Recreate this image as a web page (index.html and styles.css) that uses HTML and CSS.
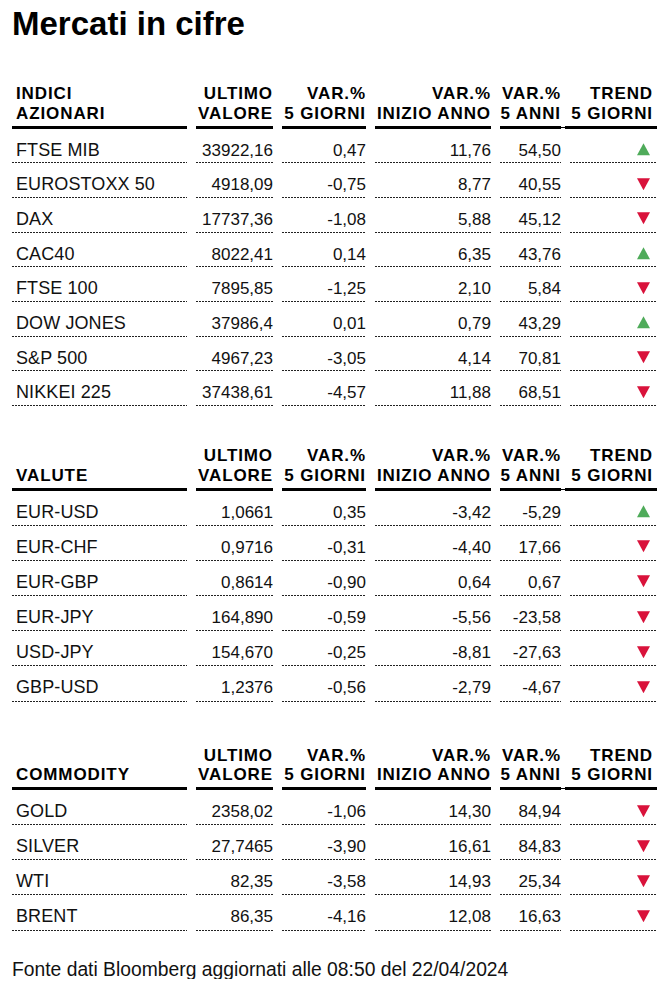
FILE: index.html
```html
<!DOCTYPE html>
<html lang="it">
<head>
<meta charset="utf-8">
<title>Mercati in cifre</title>
<link rel="stylesheet" href="styles.css">
</head>
<body>
<main class="page">
  <h1 class="title">Mercati in cifre</h1>

  <table class="mkt mkt-indici">
    <colgroup>
      <col class="c-name"><col class="c-val"><col class="c-5g"><col class="c-ia"><col class="c-5a"><col class="c-tr">
    </colgroup>
    <thead>
      <tr>
        <th class="name">INDICI<br>AZIONARI</th>
        <th>ULTIMO<br>VALORE</th>
        <th>VAR.%<br>5 GIORNI</th>
        <th>VAR.%<br>INIZIO ANNO</th>
        <th>VAR.%<br>5 ANNI</th>
        <th class="trend">TREND<br>5 GIORNI</th>
      </tr>
    </thead>
    <tbody>
      <tr><td class="name">FTSE MIB</td><td>33922,16</td><td>0,47</td><td>11,76</td><td>54,50</td><td class="trend"><svg class="tri up" viewBox="0 0 13 12"><polygon points="6.5,0 13,12 0,12"/></svg></td></tr>
      <tr><td class="name">EUROSTOXX 50</td><td>4918,09</td><td>-0,75</td><td>8,77</td><td>40,55</td><td class="trend"><svg class="tri down" viewBox="0 0 13 12"><polygon points="0,0 13,0 6.5,12"/></svg></td></tr>
      <tr><td class="name">DAX</td><td>17737,36</td><td>-1,08</td><td>5,88</td><td>45,12</td><td class="trend"><svg class="tri down" viewBox="0 0 13 12"><polygon points="0,0 13,0 6.5,12"/></svg></td></tr>
      <tr><td class="name">CAC40</td><td>8022,41</td><td>0,14</td><td>6,35</td><td>43,76</td><td class="trend"><svg class="tri up" viewBox="0 0 13 12"><polygon points="6.5,0 13,12 0,12"/></svg></td></tr>
      <tr><td class="name">FTSE 100</td><td>7895,85</td><td>-1,25</td><td>2,10</td><td>5,84</td><td class="trend"><svg class="tri down" viewBox="0 0 13 12"><polygon points="0,0 13,0 6.5,12"/></svg></td></tr>
      <tr><td class="name">DOW JONES</td><td>37986,4</td><td>0,01</td><td>0,79</td><td>43,29</td><td class="trend"><svg class="tri up" viewBox="0 0 13 12"><polygon points="6.5,0 13,12 0,12"/></svg></td></tr>
      <tr><td class="name">S&amp;P 500</td><td>4967,23</td><td>-3,05</td><td>4,14</td><td>70,81</td><td class="trend"><svg class="tri down" viewBox="0 0 13 12"><polygon points="0,0 13,0 6.5,12"/></svg></td></tr>
      <tr><td class="name">NIKKEI 225</td><td>37438,61</td><td>-4,57</td><td>11,88</td><td>68,51</td><td class="trend"><svg class="tri down" viewBox="0 0 13 12"><polygon points="0,0 13,0 6.5,12"/></svg></td></tr>
    </tbody>
  </table>

  <table class="mkt mkt-valute">
    <colgroup>
      <col class="c-name"><col class="c-val"><col class="c-5g"><col class="c-ia"><col class="c-5a"><col class="c-tr">
    </colgroup>
    <thead>
      <tr>
        <th class="name">VALUTE</th>
        <th>ULTIMO<br>VALORE</th>
        <th>VAR.%<br>5 GIORNI</th>
        <th>VAR.%<br>INIZIO ANNO</th>
        <th>VAR.%<br>5 ANNI</th>
        <th class="trend">TREND<br>5 GIORNI</th>
      </tr>
    </thead>
    <tbody>
      <tr><td class="name">EUR-USD</td><td>1,0661</td><td>0,35</td><td>-3,42</td><td>-5,29</td><td class="trend"><svg class="tri up" viewBox="0 0 13 12"><polygon points="6.5,0 13,12 0,12"/></svg></td></tr>
      <tr><td class="name">EUR-CHF</td><td>0,9716</td><td>-0,31</td><td>-4,40</td><td>17,66</td><td class="trend"><svg class="tri down" viewBox="0 0 13 12"><polygon points="0,0 13,0 6.5,12"/></svg></td></tr>
      <tr><td class="name">EUR-GBP</td><td>0,8614</td><td>-0,90</td><td>0,64</td><td>0,67</td><td class="trend"><svg class="tri down" viewBox="0 0 13 12"><polygon points="0,0 13,0 6.5,12"/></svg></td></tr>
      <tr><td class="name">EUR-JPY</td><td>164,890</td><td>-0,59</td><td>-5,56</td><td>-23,58</td><td class="trend"><svg class="tri down" viewBox="0 0 13 12"><polygon points="0,0 13,0 6.5,12"/></svg></td></tr>
      <tr><td class="name">USD-JPY</td><td>154,670</td><td>-0,25</td><td>-8,81</td><td>-27,63</td><td class="trend"><svg class="tri down" viewBox="0 0 13 12"><polygon points="0,0 13,0 6.5,12"/></svg></td></tr>
      <tr><td class="name">GBP-USD</td><td>1,2376</td><td>-0,56</td><td>-2,79</td><td>-4,67</td><td class="trend"><svg class="tri down" viewBox="0 0 13 12"><polygon points="0,0 13,0 6.5,12"/></svg></td></tr>
    </tbody>
  </table>

  <table class="mkt mkt-commodity">
    <colgroup>
      <col class="c-name"><col class="c-val"><col class="c-5g"><col class="c-ia"><col class="c-5a"><col class="c-tr">
    </colgroup>
    <thead>
      <tr>
        <th class="name">COMMODITY</th>
        <th>ULTIMO<br>VALORE</th>
        <th>VAR.%<br>5 GIORNI</th>
        <th>VAR.%<br>INIZIO ANNO</th>
        <th>VAR.%<br>5 ANNI</th>
        <th class="trend">TREND<br>5 GIORNI</th>
      </tr>
    </thead>
    <tbody>
      <tr><td class="name">GOLD</td><td>2358,02</td><td>-1,06</td><td>14,30</td><td>84,94</td><td class="trend"><svg class="tri down" viewBox="0 0 13 12"><polygon points="0,0 13,0 6.5,12"/></svg></td></tr>
      <tr><td class="name">SILVER</td><td>27,7465</td><td>-3,90</td><td>16,61</td><td>84,83</td><td class="trend"><svg class="tri down" viewBox="0 0 13 12"><polygon points="0,0 13,0 6.5,12"/></svg></td></tr>
      <tr><td class="name">WTI</td><td>82,35</td><td>-3,58</td><td>14,93</td><td>25,34</td><td class="trend"><svg class="tri down" viewBox="0 0 13 12"><polygon points="0,0 13,0 6.5,12"/></svg></td></tr>
      <tr><td class="name">BRENT</td><td>86,35</td><td>-4,16</td><td>12,08</td><td>16,63</td><td class="trend"><svg class="tri down" viewBox="0 0 13 12"><polygon points="0,0 13,0 6.5,12"/></svg></td></tr>
    </tbody>
  </table>

  <p class="source">Fonte dati Bloomberg aggiornati alle 08:50 del 22/04/2024</p>
</main>
</body>
</html>
```

FILE: styles.css
```css
* { box-sizing: border-box; }

html, body {
  margin: 0;
  background: #ffffff;
}

body {
  font-family: "Liberation Sans", Arial, sans-serif;
  color: #111111;
}

.page {
  padding: 6px 12px 0 12px;
}

.title {
  margin: 0;
  font-size: 33px;
  line-height: 36px;
  font-weight: bold;
  color: #000000;
}

.mkt {
  --pb: 3.1px;
  border-collapse: separate;
  border-spacing: 9px 0;
  table-layout: fixed;
  width: 663px;
  margin-left: -9px;
}

.mkt-indici { margin-top: 42px; --pb: 2.7px; }
.mkt-valute { margin-top: 40px; --pb: 3.2px; }
.mkt-commodity { margin-top: 44px; --pb: 3.1px; }

.c-name { width: 175px; }
.c-val { width: 77px; }
.c-5g { width: 84px; }
.c-ia { width: 116px; }
.c-5a { width: 61px; }
.c-tr { width: 87px; }

.mkt th {
  font-size: 17px;
  font-weight: bold;
  letter-spacing: 0.9px;
  line-height: 19.5px;
  text-align: right;
  vertical-align: bottom;
  white-space: nowrap;
  color: #000000;
  padding: 0 0 2.5px 0;
  border-bottom: 3px solid #000000;
}

.mkt th.name {
  text-align: left;
  padding-left: 4px;
}

.mkt th.trend {
  position: relative;
  padding-right: 4px;
}

.mkt th.trend::before {
  content: "";
  position: absolute;
  left: -9px;
  bottom: -3px;
  width: 9px;
  height: 3px;
  background:
    linear-gradient(#000, #000) right 0 top 0 / 5px 3px no-repeat,
    linear-gradient(#000, #000) left 0 top 1px / 4px 1px no-repeat;
}

.mkt td {
  font-size: 17px;
  line-height: 19px;
  text-align: right;
  vertical-align: baseline;
  white-space: nowrap;
  padding: 12px 0 var(--pb) 0;
  background-image: repeating-linear-gradient(90deg, #222 0 2px, transparent 2px 3px);
  background-size: 100% 1px;
  background-position: left bottom;
  background-repeat: no-repeat;
  padding-bottom: calc(var(--pb) + 1px);
}

.mkt td.name {
  font-size: 18px;
  text-align: left;
  padding-left: 4px;
  letter-spacing: 0.1px;
}

.mkt td.trend {
  padding-right: 7px;
}

.tri {
  width: 13px;
  height: 12.5px;
  vertical-align: baseline;
  display: inline-block;
}

.tri.up { fill: #4fab5a; }
.tri.down { fill: #d9123b; }

.source {
  margin: 29px 0 0 0;
  font-size: 19.3px;
  line-height: 19px;
  color: #111111;
}
```
